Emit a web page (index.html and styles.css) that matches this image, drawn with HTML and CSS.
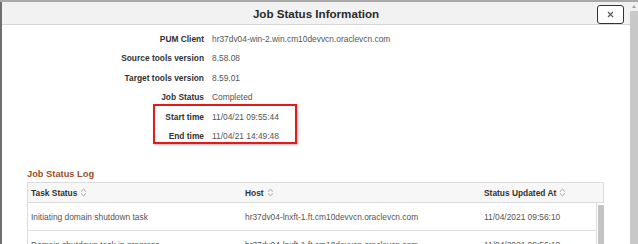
FILE: index.html
```html
<!DOCTYPE html>
<html lang="en">
<head>
    <meta charset="UTF-8">
    <title>Job Status Information</title>
    <link rel="stylesheet" href="styles.css">
</head>
<body>

<div class="window">
    <div class="modal">
        <div class="modal-header">
            <span></span>
            <h3>Job Status Information</h3>
            <button class="close-btn" type="button">
                <svg width="7" height="7" viewBox="0 0 7 7"><path d="M1 1L6 6M6 1L1 6" stroke="#555" stroke-width="1.1" fill="none"/></svg>
            </button>
        </div>

        <!-- Detail pekerjaan -->
        <div class="details">
            <div class="label">PUM Client</div>
            <div class="value">hr37dv04-win-2.win.cm10devvcn.oraclevcn.com</div>
            <div class="label">Source tools version</div>
            <div class="value">8.58.08</div>
            <div class="label">Target tools version</div>
            <div class="value">8.59.01</div>
            <div class="label">Job Status</div>
            <div class="value">Completed</div>
            <div class="label">Start time</div>
            <div class="value">11/04/21 09:55:44</div>
            <div class="label">End time</div>
            <div class="value">11/04/21 14:49:48</div>
            <div class="callout"></div>
        </div>

        <!-- Log status -->
        <div class="log">
            <h4>Job Status Log</h4>
            <div class="table">
                <div class="table-head">
                    <div class="col col-task">Task Status <svg class="sort" width="7" height="9" viewBox="0 0 7 9"><path d="M1 3.6L3.5 1.2L6 3.6M1 5.4L3.5 7.8L6 5.4" stroke="#9a9a9a" stroke-width="0.9" fill="none"/></svg></div>
                    <div class="col col-host">Host <svg class="sort" width="7" height="9" viewBox="0 0 7 9"><path d="M1 3.6L3.5 1.2L6 3.6M1 5.4L3.5 7.8L6 5.4" stroke="#9a9a9a" stroke-width="0.9" fill="none"/></svg></div>
                    <div class="col col-time">Status Updated At <svg class="sort" width="7" height="9" viewBox="0 0 7 9"><path d="M1 3.6L3.5 1.2L6 3.6M1 5.4L3.5 7.8L6 5.4" stroke="#9a9a9a" stroke-width="0.9" fill="none"/></svg></div>
                </div>
                <div class="table-body">
                    <div class="rows">
                        <div class="row">
                            <div class="col col-task">Initiating domain shutdown task</div>
                            <div class="col col-host">hr37dv04-lnxft-1.ft.cm10devvcn.oraclevcn.com</div>
                            <div class="col col-time">11/04/2021 09:56:10</div>
                        </div>
                        <div class="row">
                            <div class="col col-task">Domain shutdown task in progress</div>
                            <div class="col col-host">hr37dv04-lnxft-1.ft.cm10devvcn.oraclevcn.com</div>
                            <div class="col col-time">11/04/2021 09:56:10</div>
                        </div>
                    </div>
                    <div class="inner-scroll"><div class="inner-thumb"></div></div>
                </div>
            </div>
        </div>
    </div>

    <div class="scrollbar">
        <div class="arrow"></div>
        <div class="thumb"></div>
    </div>
</div>

</body>
</html>
```

FILE: styles.css
```css
/* Dasar halaman */
body {
    margin: 0;
    width: 638px;
    height: 244px;
    overflow: hidden;
    background-color: #fff;
    font-family: "Liberation Sans", Arial, sans-serif;
}

.window {
    display: flex;
    height: 244px;
    border-top: 2px solid #a9a9a9;
    box-sizing: border-box;
}

.modal {
    flex: 1;
    border-left: 2px solid #6f6f6f;
    overflow: hidden;
}

/* Header modal */
.modal-header {
    display: grid;
    grid-template-columns: 1fr auto 1fr;
    align-items: center;
    height: 22px;
    background-color: #f2f2f2;
    border-bottom: 1px solid #d6d6d6;
}

.modal-header h3 {
    margin: 0;
    font-size: 11.6px;
    font-weight: bold;
    color: #2b2b2b;
}

.close-btn {
    justify-self: end;
    margin-right: 6px;
    margin-top: 2px;
    width: 27px;
    height: 19px;
    padding: 0;
    background-color: #fff;
    border: 1px solid #333;
    border-radius: 3px;
    display: flex;
    align-items: center;
    justify-content: center;
}

/* Detail pekerjaan */
.details {
    position: relative;
    display: grid;
    grid-template-columns: 202px auto;
    column-gap: 8px;
    padding-top: 5px;
    font-size: 8.4px;
    line-height: 19.4px;
}

.details .label {
    text-align: right;
    font-weight: bold;
    color: #333;
}

.details .value {
    color: #555;
}

.callout {
    position: absolute;
    left: 151px;
    top: 79px;
    width: 140px;
    height: 36px;
    border: 2px solid #e3191b;
    box-shadow: 1px 1px 2px rgba(0, 0, 0, 0.3);
}

/* Log status */
.log {
    padding: 21px 0 0 25px;
}

.log h4 {
    margin: 0 0 1px 0;
    font-size: 9.3px;
    line-height: 14px;
    font-weight: bold;
    color: #9c4f2b;
}

.table {
    width: 577px;
    font-size: 8.4px;
}

.table-head {
    display: flex;
    align-items: center;
    height: 19px;
    background-color: #f7f7f7;
    border: 1px solid #dcdcdc;
    font-weight: bold;
    color: #333;
}

.col {
    padding-left: 3px;
    white-space: nowrap;
    display: flex;
    align-items: center;
    gap: 3px;
}

.col-task {
    width: 211px;
}

.col-host {
    width: 236px;
}

.col-time {
    flex: 1;
}

.table-body {
    display: flex;
    height: 60px;
    border-left: 1px solid #dcdcdc;
}

.rows {
    width: 569px;
    border-right: 1px solid #dcdcdc;
}

.row {
    display: flex;
    align-items: center;
    height: 27px;
    border-bottom: 1px solid #dcdcdc;
    color: #555;
}

.inner-scroll {
    width: 6px;
    padding: 2px 0 0 1px;
}

.inner-thumb {
    height: 60px;
    background-color: #c4c4c4;
}

/* Scrollbar jendela */
.scrollbar {
    width: 8px;
    background-color: #f1f1f1;
    display: flex;
    flex-direction: column;
    align-items: center;
}

.arrow {
    margin-top: 3px;
    width: 0;
    height: 0;
    border-left: 2px solid transparent;
    border-right: 2px solid transparent;
    border-bottom: 3px solid #a3a3a3;
}

.scrollbar .thumb {
    margin-top: 3px;
    width: 8px;
    flex: 1;
    background-color: #c8c8c8;
}
```
